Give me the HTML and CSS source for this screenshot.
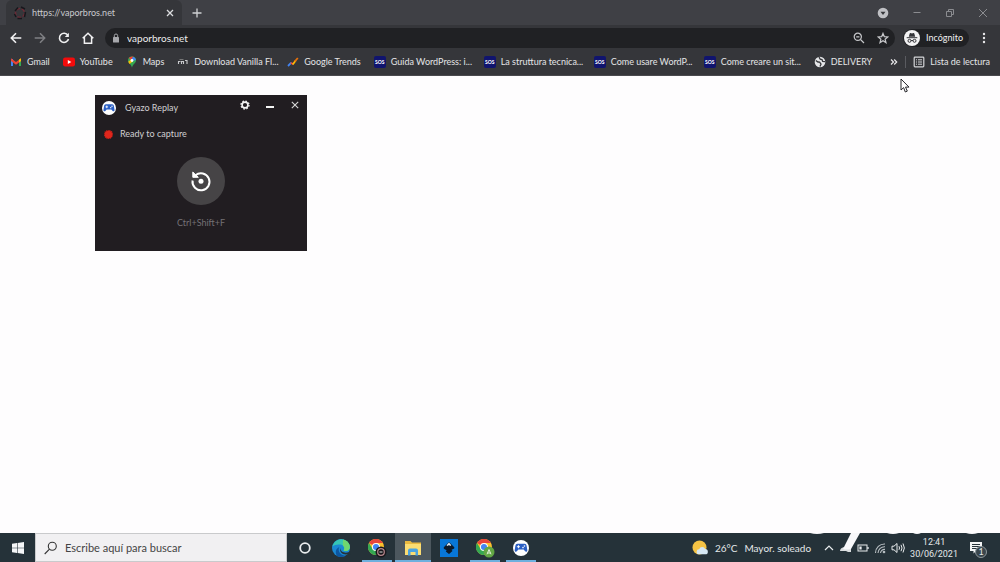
FILE: index.html
```html
<!DOCTYPE html>
<html lang="es">
<head>
<meta charset="utf-8">
<title>vaporbros.net</title>
<link rel="stylesheet" href="styles.css">
</head>
<body>
<svg width="0" height="0" class="defs" aria-hidden="true">
  <defs>
    <symbol id="chrome" viewBox="0 0 20 20">
      <circle cx="10" cy="10" r="10" fill="#fbc02d"/>
      <path d="M10 10 1.3 5A10 10 0 0 1 18.7 5H10z" fill="#e8453c"/>
      <path d="M10 10 5.7 12.5 1.3 5A10 10 0 0 0 10 20l4.3-7.5z" fill="#34a853"/>
      <circle cx="10" cy="10" r="5" fill="#fff"/><circle cx="10" cy="10" r="3.8" fill="#4285f4"/>
    </symbol>
    <symbol id="gamepad" viewBox="0 0 20 20">
      <circle cx="10" cy="10" r="10" fill="#fff"/>
      <path d="M5.500 4.800h9c1.500 0 2.200 1 2.500 2.500l.9 5.200c.3 2.200-1.800 2.900-3 1.400L13.300 12H6.700l-1.600 1.900C3.900 15.400 1.800 14.700 2.100 12.500L3 7.300C3.300 5.800 4 4.800 5.500 4.800z" fill="#2b5fc4"/>
      <path d="M6.800 6.500v3.800M4.900 8.400h3.800" stroke="#fff" stroke-width="1.200"/><circle cx="12.500" cy="9.500" r="1" fill="#fff"/><circle cx="14.300" cy="7.500" r="1" fill="#fff"/>
    </symbol>
  </defs>
</svg>
<div class="screen">
  <header class="browser">
    <div class="tabstrip">
      <div class="tab">
        <svg class="i14" viewBox="0 0 14 14" fill="none"><circle cx="7" cy="7" r="4.500" stroke="#6b2b36" stroke-width="1.500" stroke-dasharray="4 1.600"/><path d="M2 5 5 1.500M8 1l4 2M12.500 6l-1 5M9 12.500H4.500M3 11 1.500 8" stroke="#17171c" stroke-width="1.500"/></svg>
        <span class="tab-title">https://vaporbros.net</span>
        <button class="ib" aria-label="Cerrar pestaña"><svg class="i10" viewBox="0 0 10 10" stroke="#dcdde0" stroke-width="1.300"><path d="m2 2 6 6M8 2 2 8"/></svg></button>
      </div>
      <button class="ib newtab" aria-label="Nueva pestaña"><svg class="i10" viewBox="0 0 10 10" stroke="#d0d1d4" stroke-width="1.300"><path d="M5 .5v9M.5 5h9"/></svg></button>
      <div class="winctl">
        <button class="ib" aria-label="Buscar pestañas"><svg class="i12" viewBox="0 0 12 12"><circle cx="6" cy="6" r="5.300" fill="#bfc0c4"/><path d="M3.500 4.800h5L6 8z" fill="#35363a"/></svg></button>
        <button class="ib" aria-label="Minimizar"><svg class="i10" viewBox="0 0 10 10"><path d="M1.500 4.500h7" stroke="#8b8c90"/></svg></button>
        <button class="ib" aria-label="Restaurar"><svg class="i10" viewBox="0 0 10 10" fill="none" stroke="#8b8c90"><path d="M1.500 3.500h5v5h-5zM3.500 3V1.500h5v5H7"/></svg></button>
        <button class="ib" aria-label="Cerrar"><svg class="i10" viewBox="0 0 10 10" stroke="#8b8c90"><path d="m1 1 8 8M9 1 1 9"/></svg></button>
      </div>
    </div>
    <div class="toolbar">
      <nav class="nav">
        <button class="ib" aria-label="Atrás"><svg class="i12" viewBox="0 0 12 12" fill="none" stroke="#f1f1f2" stroke-width="1.600"><path d="M11.300 6H1.500M6 1.200 1.300 6 6 10.800"/></svg></button>
        <button class="ib" aria-label="Adelante"><svg class="i12" viewBox="0 0 12 12" fill="none" stroke="#7f8084" stroke-width="1.500"><path d="M.7 6h9.800M6 1.200 10.700 6 6 10.800"/></svg></button>
        <button class="ib" aria-label="Recargar"><svg class="i12" viewBox="0 0 12 12" fill="none" stroke="#f1f1f2" stroke-width="1.600"><path d="M9.900 3.300A4.600 4.600 0 1 0 10.500 7"/><path d="M10.900.8v4.100H6.800z" fill="#f1f1f2" stroke="none"/></svg></button>
        <button class="ib" aria-label="Inicio"><svg class="i12" viewBox="0 0 12 12" fill="none" stroke="#f1f1f2" stroke-width="1.500"><path d="M.7 6.300 6 1.200l5.300 5.100M2.400 5v6.300h7.200V5"/></svg></button>
      </nav>
      <div class="omnibox">
        <svg class="lock" viewBox="0 0 8 10"><rect x="1" y="4" width="6" height="5.500" rx=".6" fill="#a6a7ab"/><path d="M2.300 4V2.700a1.700 1.700 0 0 1 3.400 0V4" fill="none" stroke="#a6a7ab"/></svg>
        <input class="url" type="text" aria-label="Dirección" value="vaporbros.net">
        <button class="ib" aria-label="Zoom"><svg class="i12" viewBox="0 0 12 12" fill="none" stroke="#c6c7ca" stroke-width="1.200"><circle cx="4.800" cy="4.800" r="3.600"/><path d="m7.500 7.500 3.500 3.500M3.200 4.800h3.200"/></svg></button>
        <button class="ib" aria-label="Favorito"><svg class="i12" viewBox="0 0 12 12" fill="none" stroke="#c6c7ca" stroke-width="1.200"><path d="m6 1.400 1.300 3.200 3.500.3-2.700 2.300.9 3.400-3-1.900-3 1.900.9-3.400L1.200 4.900l3.500-.3z"/></svg></button>
      </div>
      <button class="incognito">
        <svg class="i16" viewBox="0 0 16 16"><circle cx="8" cy="8" r="8" fill="#f3f3f4"/><path d="m4.800 6.800.9-3.300q.2-.6.900-.4l1.400.4 1.400-.4q.7-.2.900.4l.9 3.300z" fill="#333438"/><path d="M2.700 7.700h10.600" stroke="#333438"/><g fill="none" stroke="#333438"><circle cx="5.500" cy="10.800" r="1.500"/><circle cx="10.500" cy="10.800" r="1.500"/><path d="M7 10.500h2"/></g></svg>
        <span>Incógnito</span>
      </button>
      <button class="ib more" aria-label="Menú"><svg class="i12" viewBox="0 0 12 12" fill="#e8e8ea"><circle cx="6" cy="2" r="1.200"/><circle cx="6" cy="6" r="1.200"/><circle cx="6" cy="10" r="1.200"/></svg></button>
    </div>
    <nav class="bookmarks">
      <a href="#"><svg class="i12" viewBox="0 0 12 12"><path d="M1 10V3h2v7z" fill="#4285f4"/><path d="M9 10V3h2v7z" fill="#34a853"/><path d="M1 2.300 6 6l5-3.700V5L6 8.800 1 5z" fill="#ea4335"/><path d="M9 3.700 11 2.300V5L9 6.500z" fill="#fbbc04"/></svg>Gmail</a>
      <a href="#"><svg class="i12" viewBox="0 0 12 12"><rect y="1.500" width="12" height="9" rx="2.200" fill="#f30b0b"/><path d="m4.800 4 3.500 2-3.500 2z" fill="#fff"/></svg>YouTube</a>
      <a href="#"><svg class="i12" viewBox="0 0 12 12"><path d="M6 .5a4 4 0 0 0-4 4C2 7.500 5.300 8 6 11.700 6.700 8 10 7.500 10 4.500a4 4 0 0 0-4-4z" fill="#34a853"/><path d="M6 .5a4 4 0 0 0-3.200 1.600L5 4 7.500 .8z" fill="#ea4335"/><path d="M7.200.7A4 4 0 0 1 10 4L6.500 5 5 4z" fill="#4285f4"/><path d="M2.200 5.800 5 3.500 7 5.500 3.500 8z" fill="#fbbc04"/><circle cx="6" cy="4.500" r="1.400" fill="#fff"/></svg>Maps</a>
      <a href="#" class="cut"><svg class="i12" viewBox="0 0 12 12" fill="none" stroke="#c9cacd"><path d="M1.500 8V5.500h2M4.500 8V5.500h2V8M8 4.500h2V8" stroke-width="1.100"/><path d="M2.500 3.500h4" stroke="#777"/></svg>Download Vanilla Fl...</a>
      <a href="#"><svg class="i12" viewBox="0 0 12 12" fill="none" stroke-width="1.800"><path d="m1 10 3.300-3.300" stroke="#4285f4"/><path d="m3.700 6.800 2.600 1.400" stroke="#ea4335"/><path d="m5.700 8.500 3.200-4.300" stroke="#fbbc04"/><path d="m7.800 5.500 3-3.500" stroke="#e8710a"/></svg>Google Trends</a>
      <a href="#" class="cut"><span class="sos">SOS</span>Guida WordPress: i...</a>
      <a href="#" class="cut"><span class="sos">SOS</span>La struttura tecnica...</a>
      <a href="#" class="cut"><span class="sos">SOS</span>Come usare WordP...</a>
      <a href="#" class="cut"><span class="sos">SOS</span>Come creare un sit...</a>
      <a href="#"><svg class="i12" viewBox="0 0 12 12"><circle cx="6" cy="6" r="5.300" fill="#e4e5e7"/><path d="M1.800 4.500 4 6l1.600.2L7 8l-1 2.500M5 1.200l1.200 2L8 3.500l.7 2 2.300.2" stroke="#35363a" stroke-width="1.300" fill="none"/></svg>DELIVERY</a>
      <div class="bm-end">
        <button class="ib" aria-label="Más marcadores"><svg class="i10" viewBox="0 0 10 10" fill="none" stroke="#e8e8ea" stroke-width="1.200"><path d="m2 2.500 2.500 2.500L2 7.500M5.200 2.500 7.700 5 5.200 7.500"/></svg></button>
        <a href="#" class="reading"><svg class="i12" viewBox="0 0 12 12" fill="none" stroke="#d4d5d8"><rect x="1.200" y="1.200" width="9.600" height="9.600" rx=".8" stroke-width="1.200"/><path d="M3 3.800h1M5 3.800h4M3 6h1M5 6h4M3 8.200h1M5 8.200h4"/></svg>Lista de lectura</a>
      </div>
    </nav>
  </header>
  <main class="page">
    <section class="gyazo">
      <div class="gz-title">
        <svg class="i14" aria-hidden="true"><use href="#gamepad"/></svg>
        <span class="gz-name">Gyazo Replay</span>
        <div class="gz-ctl">
          <button class="ib" aria-label="Ajustes"><svg class="i10" viewBox="0 0 10 10" fill="none" stroke="#f4f4f4"><circle cx="5" cy="5" r="2.900" stroke-width="1.600"/><circle cx="5" cy="5" r="4" stroke-width="1.300" stroke-dasharray="1.600 1.540"/></svg></button>
          <button class="ib" aria-label="Minimizar"><svg class="i10" viewBox="0 0 10 10"><path d="M1 7h8" stroke="#f4f4f4" stroke-width="2"/></svg></button>
          <button class="ib" aria-label="Cerrar"><svg class="i10" viewBox="0 0 10 10" stroke="#d8d8d8" stroke-width="1.100"><path d="m1.800 1.800 6.400 6.400M8.200 1.800 1.800 8.200"/></svg></button>
        </div>
      </div>
      <div class="gz-status"><span class="rec"></span>Ready to capture</div>
      <button class="gz-btn" aria-label="Replay"><svg class="i24" viewBox="0 0 24 24" fill="none" stroke="#fff" stroke-width="2"><path d="M6.500 6.300a8.500 8.500 0 1 1-2.900 5.200"/><path d="M3.800 3v5.300h5.500z" fill="#fff" stroke-width="1"/><circle cx="12" cy="12.200" r="2.500" fill="#fff" stroke="none"/></svg></button>
      <div class="gz-key">Ctrl+Shift+F</div>
    </section>
    <svg class="cursor" viewBox="0 0 10 15"><path d="M1 1v11l2.600-2.400L5.300 14l2-.9-1.800-4H9z" fill="#fff" stroke="#26262a"/></svg>
  </main>
  <footer class="taskbar">
    <button class="ib start" aria-label="Inicio"><svg class="i12" viewBox="0 0 12 12" fill="#f4f6f7"><path d="m0 1.700 5-.7v4.700H0zM5.600.9 12 0v5.700H5.600zM0 6.300h5V11l-5-.7zM5.600 6.300H12V12l-6.400-.9z"/></svg></button>
    <label class="search"><svg class="i14" viewBox="0 0 14 14" fill="none" stroke="#333" stroke-width="1.100"><circle cx="8.300" cy="5.300" r="4"/><path d="m5.500 8.200-4.800 4.800"/></svg><input type="text" placeholder="Escribe aquí para buscar" aria-label="Buscar"></label>
    <div class="apps">
      <button aria-label="Cortana"><svg class="i20" viewBox="0 0 20 20"><circle cx="10" cy="10" r="4.800" fill="none" stroke="#e9ecee" stroke-width="1.800"/></svg></button>
      <button aria-label="Edge"><svg class="i20" viewBox="0 0 20 20"><circle cx="10" cy="10" r="9" fill="#1b88d2"/><path d="M1.500 8.500C3 2.500 8 .7 12 1.500c4.500.8 7.500 5 6.800 8.500-.6 2.800-4 3.800-6.300 2.600 1.500-2 .4-5.500-3-6C6 6.200 3 7 1.500 8.500z" fill="#36c6b4"/><path d="M12 1.500c4.500.8 7.500 5 6.800 8.500-.6 2.800-4 3.800-6.300 2.600 1.500-2 1-4.200-.6-5.200z" fill="#6fd66f"/><path d="M8.300 9c-2 4 1 8.500 6.300 8.700A9 9 0 0 1 6 18c-2.500-4-1-7.500 2.300-9z" fill="#0d56a0"/><path d="M9.500 10c-.3 3.500 3.500 5.500 8 4.300 1-.4 2-1 2-1v3h-3c-5 1-8.500-2.400-7-6.300z" fill="#253239"/></svg></button>
      <button class="open" aria-label="Chrome"><svg class="i20" viewBox="0 0 20 20"><use href="#chrome" x="1" y="1" width="16" height="16"/><circle cx="14" cy="14" r="5.500" fill="#17171b"/><circle cx="14" cy="14" r="3.300" fill="none" stroke="#b9888e" stroke-width="1.200"/><path d="M12.500 14h3" stroke="#ddd"/></svg></button>
      <button class="open active" aria-label="Explorador"><svg class="i20" viewBox="0 0 20 20"><path d="M2 3h5.500L9 4.500h9V17H2z" fill="#e9b83f"/><path d="M2 6h16v11H2z" fill="#fbdc72"/><path d="M5 17.500v-5q0-2 2-2h6q2 0 2 2v5h-2.500V14h-5v3.500z" fill="#4ba3e0"/></svg></button>
      <button aria-label="Inkscape"><svg class="i20" viewBox="0 0 20 20"><path d="M1 1h18v18H1z" fill="#0877d8"/><path d="m10 4 4.800 4.700q1.500 1.500-.5 2.300l-1.800.8 1 1.200L10 16l-3.200-2.500.8-1.300L5.300 11q-1.500-.8 0-2.300z" fill="#0c1a2a"/><path d="m10 4.500 2.300 2.700-1.200.8-1.100-1-1.500 1-1-.8z" fill="#dce8f2"/></svg></button>
      <button class="open" aria-label="Chrome A"><svg class="i20" viewBox="0 0 20 20"><use href="#chrome" x="1" y="1" width="16" height="16"/><circle cx="14" cy="14" r="5.500" fill="#62a744"/><path d="m12 16.300 2-4.800 2 4.800M12.700 15h2.600" stroke="#e5f2df" fill="none"/></svg></button>
      <button class="open" aria-label="Gyazo Replay"><svg class="i16" aria-hidden="true"><use href="#gamepad"/></svg></button>
    </div>
    <div class="tray">
      <button class="weather"><svg class="i16" viewBox="0 0 16 16"><circle cx="7.500" cy="7.500" r="7" fill="#f5c344"/><path d="M7 14.300a2.500 2.500 0 0 1 .2-5 3.200 3.200 0 0 1 6-.2 2.600 2.600 0 0 1 .1 5.200z" fill="#d6e8f4"/></svg><span>26°C</span><span>Mayor. soleado</span></button>
      <button class="ib" aria-label="Iconos ocultos"><svg class="i12" viewBox="0 0 12 12" fill="none" stroke="#e9ecee" stroke-width="1.200"><path d="m2 8 4-4 4 4"/></svg></button>
      <svg class="i12" viewBox="0 0 12 12" fill="#d9dcde"><path d="M0 9q0-3 4-4h7v5H8L6 9z"/></svg>
      <svg class="i12" viewBox="0 0 12 12" fill="none" stroke="#e9ecee"><rect x="1" y="3" width="9" height="6"/><path d="M11 5v2M3 4.500v3M4 4.500v3" stroke-width="1.300"/></svg>
      <svg class="i12" viewBox="0 0 12 12" fill="none" stroke="#b9bfc3" stroke-width="1.100"><path d="M1.500 11A9 9 0 0 1 11 2M4 11a6.500 6.500 0 0 1 7-6.300M6.500 11A4 4 0 0 1 11 7.400"/><circle cx="10" cy="10" r=".8" fill="#e9ecee"/></svg>
      <svg class="i14" viewBox="0 0 14 14" fill="none" stroke="#e9ecee"><path d="M1 5.200h2L6 2.500v9L3 8.800H1zM8 5.200q1 1.800 0 3.600M10 3.800q2 3.200 0 6.400M12 2.500q2.700 4.500 0 9"/></svg>
      <button class="clock"><span>12:41</span><span>30/06/2021</span></button>
      <button class="notif" aria-label="1 notificación"><svg class="i16" viewBox="0 0 16 16"><path d="M1 2h12v9H7l-2.500 2.500V11H1z" fill="#f2f4f5"/><path d="M3 4.500h8M3 6.500h8M3 8.500h5" stroke="#26333a"/></svg><span class="badge">1</span></button>
    </div>
    <svg class="mark" viewBox="0 0 190 29" fill="#f8f8fa"><path d="M0 0h14q-7 2-14 0zM41 0h9l-9 16q-4 1-8 0zM77 0h12q-6 2-12 0zM103 0h8q-4 2-8 0zM156 0h12q-6 2-12 0z"/></svg>
  </footer>
</div>
</body>
</html>
```
FILE: styles.css
```css
* { box-sizing: border-box; }
body { margin: 0; font-family: "Lato", "Open Sans", sans-serif; font-size: 9px; line-height: 12px; }
button, input { font: inherit; color: inherit; border: 0; margin: 0; padding: 0; background: none; outline: 0; }
a { color: inherit; text-decoration: none; }
svg { display: block; flex: none; }
.defs { position: absolute; }
.i10 { width: 10px; height: 10px; }
.i12 { width: 12px; height: 12px; }
.i14 { width: 14px; height: 14px; }
.i16 { width: 16px; height: 16px; }
.i20 { width: 20px; height: 20px; }
.i24 { width: 24px; height: 24px; }
.ib { display: flex; align-items: center; justify-content: center; flex: none; }

.screen { display: flex; flex-direction: column; min-height: 100vh; }
.browser { background: #35363a; color: #e4e5e7; border-bottom: 1px solid #4a4a4e; }

.tabstrip { display: flex; align-items: center; height: 25px; background: #3f4045; }
.tab { display: flex; align-items: center; gap: 5px; width: 176px; height: 25px; margin-left: 6px; padding: 0 7px; background: #35363a; border-radius: 6px 6px 0 0; }
.tab-title { flex: 1; white-space: nowrap; color: #c9cace; }
.newtab { margin-left: 10px; }
.winctl { display: flex; gap: 23px; margin-left: auto; padding-right: 12px; }

.toolbar { display: flex; align-items: center; height: 26px; padding: 0 10px; }
.nav { display: flex; gap: 12px; margin-right: 11px; }
.omnibox { display: flex; align-items: center; gap: 12px; flex: 1; height: 20px; padding: 0 6px 0 7px; background: #202124; border-radius: 10px; }
.lock { width: 8px; height: 10px; }
.url { flex: 1; min-width: 0; font-size: 10px; color: #eceded; margin-left: -5px; }
.incognito { display: flex; align-items: center; gap: 6px; height: 18px; margin-left: 8px; padding: 0 6px 0 1px; background: #202124; border-radius: 9px; color: #f0f0f1; }
.more { margin-left: 9px; }

.bookmarks { display: flex; align-items: center; gap: 13px; height: 24px; padding: 0 10px 3px; white-space: nowrap; }
.bookmarks a { display: flex; align-items: center; gap: 5px; }
.bookmarks .cut { width: 97px; }
.sos { display: flex; align-items: center; justify-content: center; flex: none; width: 12px; height: 12px; background: #10146e; border-radius: 2px; color: #fff; font-size: 5px; font-weight: 700; }
.bm-end { display: flex; align-items: center; gap: 6px; margin-left: auto; }
.bm-end .reading { border-left: 1px solid #5a5b60; padding-left: 7px; }

.page { flex: 1; position: relative; background: #fefdfe; padding: 19px 95px; }
.gyazo { display: flex; flex-direction: column; width: 212px; padding: 5px 7px 22px; background: #211d21; color: #d0cfd1; }
.gz-title { display: flex; align-items: center; height: 15px; gap: 9px; }
.gz-ctl { display: flex; gap: 15px; margin-left: auto; margin-bottom: 6px; }
.gz-status { display: flex; align-items: center; gap: 7px; margin-top: 13px; padding-left: 2px; }
.rec { width: 9px; height: 9px; border-radius: 50%; background: #e0261c; border: 1px dotted #7c1714; }
.gz-btn { display: flex; align-items: center; justify-content: center; align-self: center; width: 48px; height: 48px; margin-top: 17px; border-radius: 50%; background: #464446; }
.gz-key { margin-top: 12px; text-align: center; color: #747175; }
.cursor { position: absolute; left: 900px; top: 2px; width: 10px; height: 15px; }

.taskbar { position: relative; display: flex; align-items: stretch; height: 29px; background: #253239; color: #e4e8ea; }
.start { width: 35px; }
.search { display: flex; align-items: center; gap: 7px; width: 252px; padding-left: 8px; background: #f1f0f2; border: 1px solid #c9cacc; }
.search input { flex: 1; min-width: 0; font-size: 11px; color: #333; }
.search input::placeholder { color: #444; opacity: 1; }
.apps { display: flex; }
.apps button { display: flex; align-items: center; justify-content: center; width: 36px; border: solid transparent; border-width: 2px 0; }
.apps .open { width: 30px; margin: 0 3px; border-bottom-color: #6eb0de; }
.apps .active { width: 36px; margin: 0; background: #4c575e; border-top-color: #4c575e; }
.tray { display: flex; align-items: center; gap: 5px; margin-left: auto; padding-right: 15px; }
.weather { display: flex; align-items: center; gap: 7px; font-size: 10px; margin-right: 7px; }
.clock { display: flex; flex-direction: column; align-items: center; font-family: "Roboto", sans-serif; }
.notif { position: relative; margin-left: 6px; }
.badge { position: absolute; left: 6px; top: 6px; width: 12px; height: 12px; border-radius: 50%; background: #39464d; border: 1px solid #8f989d; font-size: 9px; line-height: 10px; }
.mark { position: absolute; right: 0; top: 0; width: 190px; height: 29px; pointer-events: none; }
```
